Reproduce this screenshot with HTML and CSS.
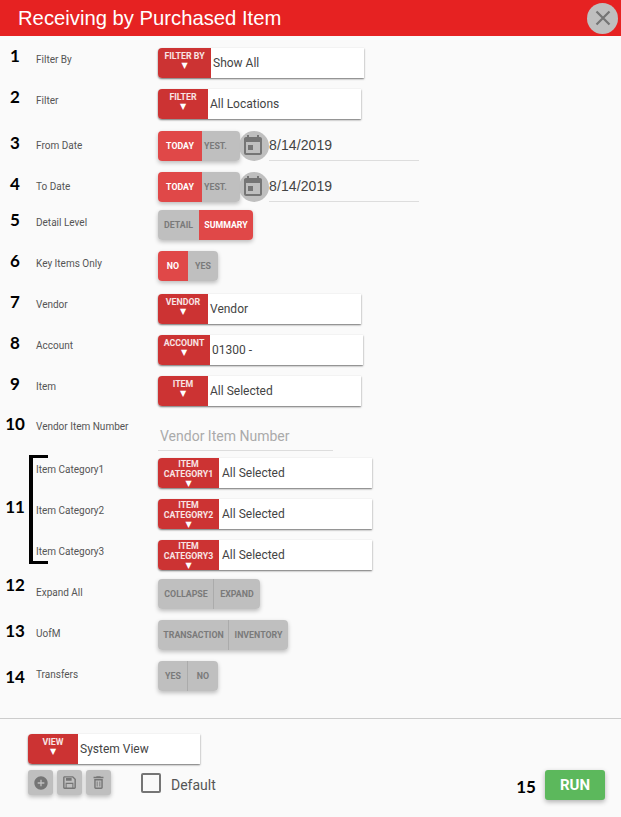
FILE: index.html
```html
<!DOCTYPE html>
<html lang="en">
<head>
    <meta charset="UTF-8">
    <meta name="viewport" content="width=device-width, initial-scale=1.0">
    <title>Receiving by Purchased Item</title>
    <link rel="stylesheet" href="styles.css">
</head>
<body>

    <header class="title-bar">
        <h1>Receiving by Purchased Item</h1>
        <button class="close-btn" aria-label="Close">
            <svg viewBox="0 0 24 24" width="24" height="24"><path d="M5.500 5.500l13 13M18.500 5.500l-13 13"/></svg>
        </button>
    </header>

    <main class="form">
        <div class="row">
            <label class="row-label">Filter By</label>
            <div class="drop drop-53 drop-206">
                <span class="drop-btn">FILTER BY<i>▼</i></span>
                <span class="drop-val">Show All</span>
            </div>
        </div>
        <div class="row row-42">
            <label class="row-label">Filter</label>
            <div class="drop drop-50">
                <span class="drop-btn">FILTER<i>▼</i></span>
                <span class="drop-val">All Locations</span>
            </div>
        </div>
        <div class="row">
            <label class="row-label label-low">From Date</label>
            <div class="toggle">
                <span class="opt on w-44">TODAY</span>
                <span class="opt opt-yest">YEST.</span>
            </div>
            <span class="cal">
                <svg viewBox="0 0 24 24" width="24" height="24"><path d="M16 1v2H8V1H6v2H5C3.900 3 3 3.900 3 5v14c0 1.100.9 2 2 2h14c1.100 0 2-.9 2-2V5c0-1.100-.9-2-2-2h-1V1h-2zm3 18H5V8h14v11zM7 11h5v5H7z"/></svg>
            </span>
            <span class="date-val">8/14/2019</span>
        </div>
        <div class="row row-38">
            <label class="row-label label-low">To Date</label>
            <div class="toggle">
                <span class="opt on w-44">TODAY</span>
                <span class="opt opt-yest">YEST.</span>
            </div>
            <span class="cal">
                <svg viewBox="0 0 24 24" width="24" height="24"><path d="M16 1v2H8V1H6v2H5C3.900 3 3 3.900 3 5v14c0 1.100.9 2 2 2h14c1.100 0 2-.9 2-2V5c0-1.100-.9-2-2-2h-1V1h-2zm3 18H5V8h14v11zM7 11h5v5H7z"/></svg>
            </span>
            <span class="date-val">8/14/2019</span>
        </div>
        <div class="row">
            <label class="row-label label-mid">Detail Level</label>
            <div class="toggle">
                <span class="opt w-41">DETAIL</span>
                <span class="opt on w-54">SUMMARY</span>
            </div>
        </div>
        <div class="row row-43">
            <label class="row-label label-mid">Key Items Only</label>
            <div class="toggle">
                <span class="opt on w-30">NO</span>
                <span class="opt w-30">YES</span>
            </div>
        </div>
        <div class="row">
            <label class="row-label label-top">Vendor</label>
            <div class="drop drop-50">
                <span class="drop-btn">VENDOR<i>▼</i></span>
                <span class="drop-val">Vendor</span>
            </div>
        </div>
        <div class="row">
            <label class="row-label label-top">Account</label>
            <div class="drop drop-52">
                <span class="drop-btn">ACCOUNT<i>▼</i></span>
                <span class="drop-val">01300 -</span>
            </div>
        </div>
        <div class="row">
            <label class="row-label label-top">Item</label>
            <div class="drop drop-50">
                <span class="drop-btn">ITEM<i>▼</i></span>
                <span class="drop-val">All Selected</span>
            </div>
        </div>
        <div class="row">
            <label class="row-label label-field">Vendor Item Number</label>
            <div class="text-field">Vendor Item Number</div>
        </div>
        <div class="row">
            <label class="row-label">Item Category1</label>
            <div class="drop drop-61">
                <span class="drop-btn">ITEM<br>CATEGORY1<i>▼</i></span>
                <span class="drop-val">All Selected</span>
            </div>
        </div>
        <div class="row">
            <label class="row-label">Item Category2</label>
            <div class="drop drop-61">
                <span class="drop-btn">ITEM<br>CATEGORY2<i>▼</i></span>
                <span class="drop-val">All Selected</span>
            </div>
        </div>
        <div class="row row-39">
            <label class="row-label">Item Category3</label>
            <div class="drop drop-61">
                <span class="drop-btn">ITEM<br>CATEGORY3<i>▼</i></span>
                <span class="drop-val">All Selected</span>
            </div>
        </div>
        <div class="row">
            <label class="row-label label-13">Expand All</label>
            <div class="toggle">
                <span class="opt div w-56">COLLAPSE</span>
                <span class="opt w-46">EXPAND</span>
            </div>
        </div>
        <div class="row">
            <label class="row-label label-13">UofM</label>
            <div class="toggle">
                <span class="opt div w-71">TRANSACTION</span>
                <span class="opt w-59">INVENTORY</span>
            </div>
        </div>
        <div class="row">
            <label class="row-label label-13">Transfers</label>
            <div class="toggle">
                <span class="opt div w-30">YES</span>
                <span class="opt w-30">NO</span>
            </div>
        </div>
    </main>

    <footer class="foot">
        <div class="foot-left">
            <div class="drop drop-50 drop-172">
                <span class="drop-btn">VIEW<i>▼</i></span>
                <span class="drop-val">System View</span>
            </div>
            <div class="foot-tools">
                <button class="icon-btn" aria-label="Add">
                    <svg viewBox="0 0 24 24" width="16" height="16"><path d="M12 2C6.480 2 2 6.480 2 12s4.480 10 10 10 10-4.480 10-10S17.520 2 12 2zm5 11h-4v4h-2v-4H7v-2h4V7h2v4h4v2z"/></svg>
                </button>
                <button class="icon-btn" aria-label="Save">
                    <svg viewBox="0 0 24 24" width="17" height="17"><path d="M17 3H5c-1.110 0-2 .9-2 2v14c0 1.100.89 2 2 2h14c1.100 0 2-.9 2-2V7l-4-4zm2 16H5V5h11.170L19 7.830V19zM7 5.500h8v4H7zM6.500 12.500h11V19h-11zM8 14v5h8v-5z"/></svg>
                </button>
                <button class="icon-btn" aria-label="Delete">
                    <svg viewBox="0 0 24 24" width="17" height="17"><path d="M6 19c0 1.100.9 2 2 2h8c1.100 0 2-.9 2-2V7H6v12zM8 9h8v10H8V9zm1.500 1.500h1.200v7H9.500zm3.800 0h1.200v7h-1.200zM15.500 4l-1-1h-5l-1 1H5v2h14V4z"/></svg>
                </button>
                <span class="check"></span>
                <span class="check-label">Default</span>
            </div>
        </div>
        <button class="run-btn">RUN</button>
    </footer>

    <!-- callout numbers drawn over the form -->
    <span class="note n1">1</span>
    <span class="note n2">2</span>
    <span class="note n3">3</span>
    <span class="note n4">4</span>
    <span class="note n5">5</span>
    <span class="note n6">6</span>
    <span class="note n7">7</span>
    <span class="note n8">8</span>
    <span class="note n9">9</span>
    <span class="note n10">10</span>
    <span class="note n11">11</span>
    <span class="note n12">12</span>
    <span class="note n13">13</span>
    <span class="note n14">14</span>
    <span class="note n15">15</span>
    <span class="bracket"></span>

</body>
</html>
```

FILE: styles.css
```css
html, body {
    margin: 0;
    padding: 0;
}
body {
    position: relative;
    width: 621px;
    height: 817px;
    overflow: hidden;
    background: #FAFAFA;
    color: #444;
    font-family: Roboto, Arial, sans-serif;
}
.title-bar {
    display: flex;
    align-items: center;
    justify-content: space-between;
    height: 36px;
    padding: 0 3px 0 18px;
    background: #E62222;
}
.title-bar h1 {
    margin: 0;
    color: white;
    font-family: "Liberation Sans", Arial, sans-serif;
    font-size: 20.25px;
    font-weight: 400;
}
.close-btn {
    display: flex;
    align-items: center;
    justify-content: center;
    width: 31px;
    height: 31px;
    padding: 0;
    border: none;
    border-radius: 50%;
    background: #BFBFBF;
}
.close-btn path {
    fill: none;
    stroke: #757575;
    stroke-width: 2.2;
}

.form {
    height: 670px;
    padding: 12px 0 0 36px;
}
.row {
    display: flex;
    height: 41px;
}
.row-38 { height: 38px; }
.row-39 { height: 39px; }
.row-42 { height: 42px; }
.row-43 { height: 43px; }
.row-label {
    box-sizing: border-box;
    flex: none;
    width: 122px;
    padding-top: 6px;
    color: #555;
    font-size: 10px;
    line-height: 12px;
}
.label-field { padding-top: 4px; }
.label-top { padding-top: 5px; }
.label-mid { padding-top: 7px; }
.label-13 { padding-top: 8px; }
.label-low { padding-top: 9px; }

/* red dropdown button + white value box */
.drop {
    display: flex;
    width: 203px;
    height: 30px;
    border-radius: 4px 0 0 4px;
    background: white;
    box-shadow: 0 1px 2px rgba(0, 0, 0, 0.55);
}
.drop-206 { width: 206px; }
.drop-172 { width: 172px; }
.drop-52 { width: 205px; }
.drop-61 { width: 214px; }
.drop-btn {
    flex: none;
    box-sizing: border-box;
    width: 50px;
    padding-top: 3px;
    border-radius: 4px 0 0 4px;
    background: #CC3333;
    color: #F8E4E4;
    font-size: 8.8px;
    font-weight: 700;
    line-height: 10px;
    text-align: center;
}
.drop-53 .drop-btn { width: 53px; }
.drop-52 .drop-btn { width: 52px; }
.drop-61 .drop-btn {
    width: 61px;
    padding-top: 1px;
}
.drop-btn i {
    display: block;
    color: white;
    font-family: "DejaVu Sans", sans-serif;
    font-size: 8px;
    font-style: normal;
}
.drop-val {
    padding-left: 2px;
    color: #444;
    font-size: 12px;
    line-height: 30px;
}
.drop-61 .drop-val { padding-left: 3px; }

/* segmented toggle */
.toggle {
    display: flex;
    height: 30px;
    border-radius: 4px;
    overflow: hidden;
    box-shadow: 0 2px 4px rgba(0, 0, 0, 0.25);
}
.opt {
    background: #BFBFBF;
    color: #7A7A7A;
    font-size: 8.8px;
    font-weight: 700;
    line-height: 30px;
    text-align: center;
}
.opt.on {
    background: #E04848;
    color: white;
}
.opt.div { box-shadow: inset -1px 0 0 #ABABAB; }
.opt-yest {
    box-sizing: border-box;
    width: 38px;
    padding-left: 2px;
    text-align: left;
}
.w-30 { width: 30px; }
.w-41 { width: 41px; }
.w-44 { width: 44px; }
.w-46 { width: 46px; }
.w-54 { width: 54px; }
.w-56 { width: 56px; }
.w-59 { width: 59px; }
.w-71 { width: 71px; }

.cal {
    display: flex;
    align-items: center;
    justify-content: center;
    flex: none;
    width: 30px;
    height: 30px;
    margin-left: -1px;
    border-radius: 50%;
    background: #BFBFBF;
}
.cal svg { margin-left: -2px; }
.cal path {
    fill: #757575;
    fill-rule: evenodd;
}
.date-val {
    box-sizing: border-box;
    width: 150px;
    height: 30px;
    border-bottom: 1px solid #DDD;
    color: #444;
    font-family: "Liberation Sans", Arial, sans-serif;
    font-size: 14px;
    letter-spacing: 0.1px;
    line-height: 28px;
}
.text-field {
    box-sizing: border-box;
    width: 175px;
    height: 34px;
    padding-left: 2px;
    border-bottom: 1px solid #DDD;
    color: #AAA;
    font-size: 14px;
    line-height: 38px;
}

.foot {
    box-sizing: border-box;
    display: flex;
    justify-content: space-between;
    height: 99px;
    padding: 15px 16px 0 28px;
    border-top: 1px solid #CCC;
}
.foot-tools {
    display: flex;
    align-items: flex-start;
    gap: 4px;
    margin-top: 6px;
}
.icon-btn {
    display: flex;
    align-items: center;
    justify-content: center;
    width: 25px;
    height: 25px;
    padding: 0;
    border: none;
    border-radius: 3px;
    background: #BFBFBF;
    box-shadow: 0 2px 4px rgba(0, 0, 0, 0.25);
}
.icon-btn path {
    fill: #757575;
    fill-rule: evenodd;
}
.check {
    box-sizing: border-box;
    width: 20px;
    height: 20px;
    margin: 3px 0 0 26px;
    border: 2px solid #757575;
    border-radius: 2px;
}
.check-label {
    margin: 7px 0 0 6px;
    color: #555;
    font-size: 14px;
    line-height: 16px;
}
.run-btn {
    width: 60px;
    height: 30px;
    margin-top: 36px;
    padding: 0;
    border: none;
    border-radius: 3px;
    background: #5CB85C;
    box-shadow: 0 2px 5px rgba(0, 0, 0, 0.3);
    color: white;
    font-family: Roboto, Arial, sans-serif;
    font-size: 15px;
    font-weight: 700;
}

/* callouts */
.note {
    position: absolute;
    width: 30px;
    color: black;
    font-family: Lato, Arial, sans-serif;
    font-size: 17px;
    font-weight: 700;
    line-height: 20px;
    text-align: center;
}
.n1, .n2, .n3, .n4, .n5, .n6, .n7, .n8, .n9, .n10, .n11, .n12, .n13, .n14 { left: 0; }
.n1 { top: 46px; }
.n2 { top: 87px; }
.n3 { top: 133px; }
.n4 { top: 174px; }
.n5 { top: 210px; }
.n6 { top: 251px; }
.n7 { top: 292px; }
.n8 { top: 333px; }
.n9 { top: 374px; }
.n10 { top: 414px; }
.n11 { top: 497px; }
.n12 { top: 575px; }
.n13 { top: 621px; }
.n14 { top: 667px; }
.n15 { top: 777px; left: 511px; }
.bracket {
    position: absolute;
    top: 455px;
    left: 29px;
    box-sizing: border-box;
    width: 19px;
    height: 109px;
    border: 3px solid black;
    border-left-width: 4px;
    border-right: none;
}
```
